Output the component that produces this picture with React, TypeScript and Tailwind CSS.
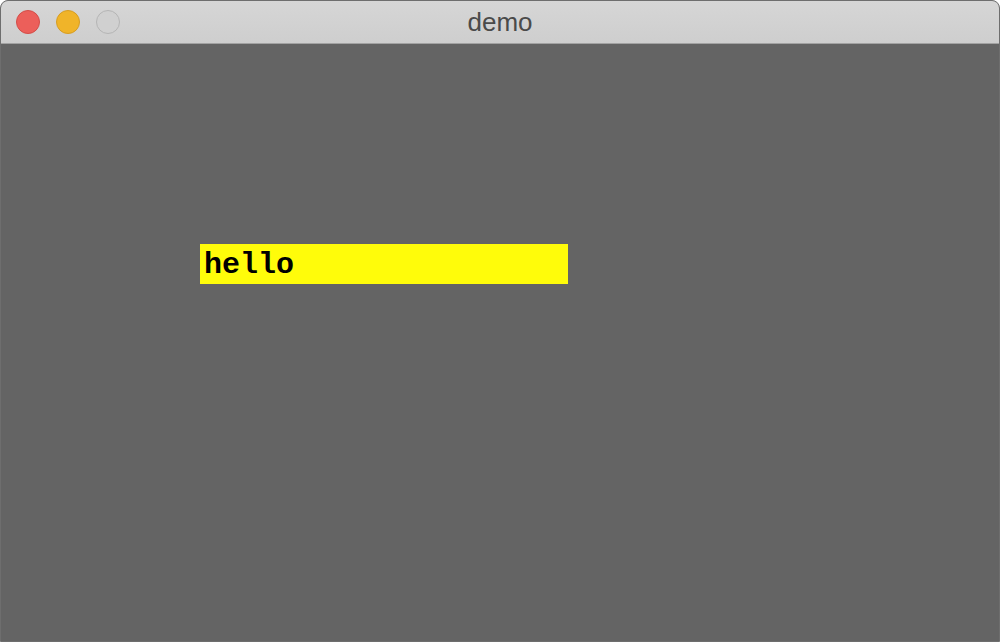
export default function App() {
    return (
        <div className="w-[1000px] h-[642px] bg-[#646464] flex flex-col overflow-hidden rounded-t-[8px] border border-[#6e6e6e]">
            <div className="h-[43px] shrink-0 bg-gradient-to-b from-[#d6d6d6] to-[#cecece] border-b border-[#a2a2a2] relative flex items-center justify-center">
                <div className="absolute left-[15px] top-[9px] flex gap-[16px]">
                    <div className="w-[24px] h-[24px] rounded-full bg-[#ec5f5a] border border-[#d44d48]" />
                    <div className="w-[24px] h-[24px] rounded-full bg-[#f0b429] border border-[#d79d22]" />
                    <div className="w-[24px] h-[24px] rounded-full bg-[#d0d0d0] border border-[#b5b5b5]" />
                </div>
                <span className="text-[26px] text-[#4a4a4a] font-['Liberation_Sans',Arial,sans-serif] leading-none">
                    demo
                </span>
            </div>
            <div className="flex-1 pt-[200px] pl-[199px]">
                <div className="w-[368px] h-[40px] bg-[#fffc0a] flex items-center pl-[4px] pt-[1px]">
                    <span className="font-['Courier_New','Liberation_Mono',monospace] font-bold text-[30px] text-black leading-none">
                        hello
                    </span>
                </div>
            </div>
        </div>
    );
}
